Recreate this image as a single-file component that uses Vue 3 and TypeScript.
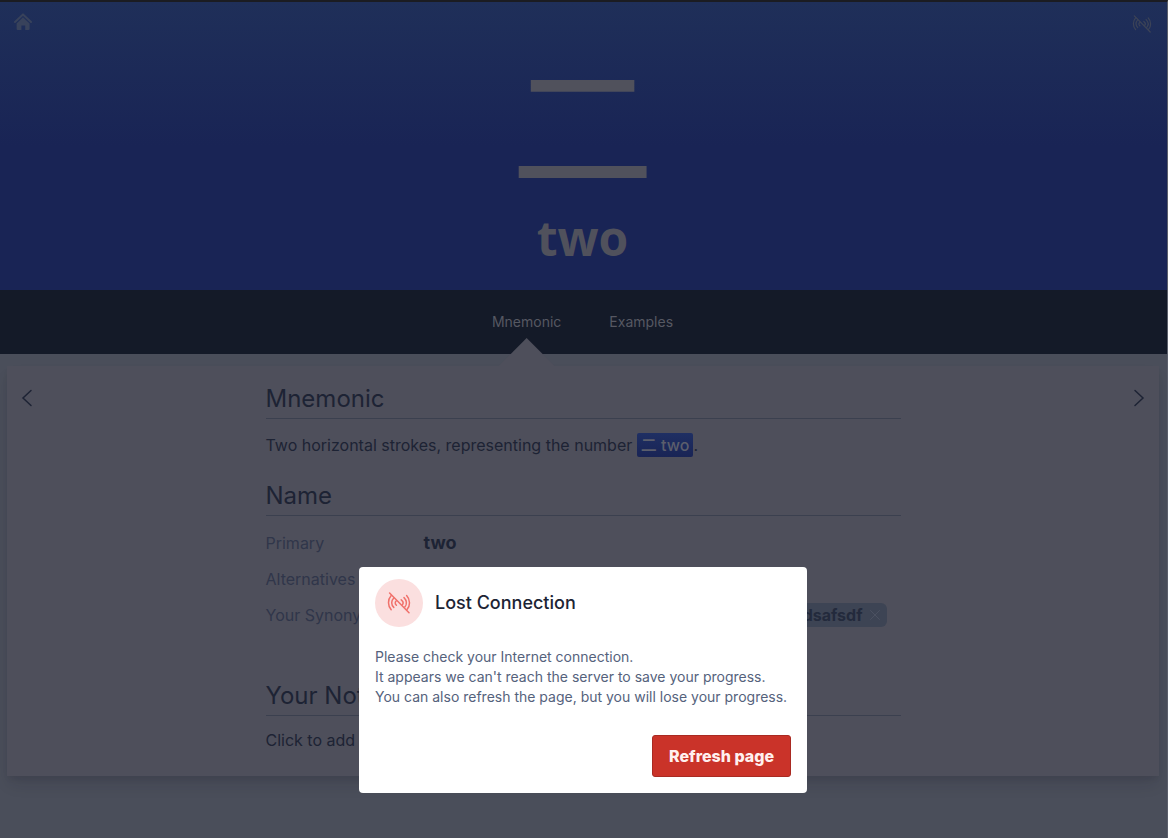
<script setup lang="ts">
const tabs = [
  { label: 'Mnemonic', active: true },
  { label: 'Examples', active: false },
]
const arcs = [
  'M4.2 3.6C0.6 7.6 0.6 13.8 4.2 17.8',
  'M6.8 6C4 8.8 4 12.6 6.8 15.4',
  'M9.4 8.8C7.8 10.2 7.8 11.8 9.4 13.2',
  'M19.6 3.6C23.4 7.6 23.4 13.8 20 17.6',
  'M17 5.6C20 8.6 20 12.4 17.8 15',
  'M14.2 7.8C16.4 9.4 16.4 11.4 15.4 12.8',
  'M2.6 1L22 20.8',
]
</script>

<template>
  <div class="page">
    <header class="hero">
      <a class="home" href="#" aria-label="Home">
        <svg viewBox="0 0 18 18" width="18" height="18">
          <path class="roof" d="M1 9L9 1.4L17 9" />
          <path class="house" d="M9 4.2L15.6 10.4V16Q15.6 17 14.6 17H11.2V12.4H7.4V17H3.6Q2.6 17 2.6 16V10.4Z" />
        </svg>
      </a>
      <svg class="signal" viewBox="0 0 24 22" width="20" height="18">
        <path v-for="d in arcs" :key="d" :d="d" />
      </svg>
      <div class="kanji" lang="ja">二</div>
      <h1>two</h1>
    </header>

    <nav class="tabs">
      <a v-for="t in tabs" :key="t.label" href="#" :class="{ active: t.active }">{{ t.label }}</a>
    </nav>

    <main class="card">
      <button class="arrow" type="button" aria-label="Previous">
        <svg viewBox="0 0 12 18" width="12" height="18"><path d="M10 1.5L2 9L10 16.5" /></svg>
      </button>
      <div class="content">
        <section>
          <h2>Mnemonic</h2>
          <p class="story">
            Two horizontal strokes, representing the number
            <span class="radical"><span class="glyph" lang="ja">二</span> two</span>.
          </p>
        </section>
        <section>
          <h2>Name</h2>
          <dl>
            <dt>Primary</dt>
            <dd class="primary">two</dd>
            <dt>Alternatives</dt>
            <dd></dd>
            <dt>Your Synonyms</dt>
            <dd class="synonyms">
              <span class="chip">dsafsdf
                <button type="button" aria-label="Remove dsafsdf">
                  <svg viewBox="0 0 12 12" width="12" height="12"><path d="M1.5 1.5L10.5 10.5M10.5 1.5L1.5 10.5" /></svg>
                </button>
              </span>
            </dd>
          </dl>
        </section>
        <section>
          <h2>Your Notes</h2>
          <p class="note">Click to add note</p>
        </section>
      </div>
      <button class="arrow" type="button" aria-label="Next">
        <svg viewBox="0 0 12 18" width="12" height="18"><path d="M2 1.5L10 9L2 16.5" /></svg>
      </button>
    </main>

    <div class="overlay">
      <div class="dialog" role="alertdialog" aria-modal="true" aria-labelledby="lost-title" aria-describedby="lost-text">
        <div class="dialog-head">
          <span class="badge">
            <svg viewBox="0 0 24 22" width="24" height="22">
              <path v-for="d in arcs" :key="d" :d="d" />
            </svg>
          </span>
          <h3 id="lost-title">Lost Connection</h3>
        </div>
        <p id="lost-text">
          Please check your Internet connection.<br />
          It appears we can't reach the server to save your progress.<br />
          You can also refresh the page, but you will lose your progress.
        </p>
        <div class="actions">
          <button class="refresh" type="button">Refresh page</button>
        </div>
      </div>
    </div>
  </div>
</template>

<style>
body {
  margin: 0;
  background: #4a4e5a;
}
</style>

<style scoped>
.page {
  box-sizing: border-box;
  min-height: 100vh;
  border-top: 2px solid #1b1c22;
  border-right: 1px solid #5b5f6b;
  padding-right: 1px;
  background: #4a4e5a;
  color: #1d2334;
  font-family: Inter, "Liberation Sans", "Noto Sans CJK JP", sans-serif;
  font-size: 16px;
  line-height: 24px;
}
h1, h2, h3, p, dl, dd { margin: 0; }
button {
  border: 0;
  padding: 0;
  background: none;
  font: inherit;
  color: inherit;
}
svg { display: block; fill: none; stroke: currentColor; stroke-linecap: round; }

.hero {
  position: relative;
  box-sizing: border-box;
  height: 288px;
  margin-right: -1px;
  padding: 44px 2px 0 0;
  background: linear-gradient(#1f2f59, #192455 50%, #192455);
  color: #50515c;
  text-align: center;
}
.home { position: absolute; left: 14px; top: 11px; color: #38425b; }
.roof { stroke-width: 2; stroke-linejoin: round; }
.house { fill: currentColor; stroke: none; }
.signal { position: absolute; right: 15px; top: 13px; color: #3c4357; stroke-width: 1.5; }
.kanji {
  font-family: "Noto Sans CJK JP", sans-serif;
  font-size: 144px;
  line-height: 144px;
}
h1 {
  margin-top: 12px;
  font-family: "Open Sans", "Noto Sans", sans-serif;
  font-size: 48px;
  line-height: 72px;
  font-weight: 700;
}

.tabs {
  display: flex;
  justify-content: center;
  gap: 48px;
  height: 64px;
  margin-right: -1px;
  padding-right: 2px;
  background: #141a28;
  font-size: 14px;
  line-height: 64px;
}
.tabs a { position: relative; color: #565862; text-decoration: none; }
.tabs .active::after {
  content: "";
  position: absolute;
  left: 50%;
  top: 48px;
  width: 56px;
  height: 28px;
  margin-left: -28px;
  background: #4e4f5b;
  clip-path: polygon(50% 0, 100% 100%, 0 100%);
}

.card {
  display: flex;
  justify-content: space-between;
  align-items: flex-start;
  box-sizing: border-box;
  min-height: 410px;
  margin: 12px 7px 0;
  padding: 16px 14px;
  background: #4e4f5b;
  box-shadow: 0 10px 15px -3px rgba(20, 22, 34, 0.14), 0 4px 6px -2px rgba(20, 22, 34, 0.1);
}
.arrow { padding-top: 7px; }
.arrow path { stroke-width: 1.5; }
.content { flex: 0 1 635px; }
h2 {
  margin-bottom: 14px;
  padding-bottom: 2px;
  border-bottom: 1px solid #3b404f;
  font-size: 24px;
  line-height: 34px;
  font-weight: 400;
}
.story { margin-bottom: 22px; }
.note { line-height: 20px; }
.radical {
  display: inline-block;
  padding: 0 4px;
  border-radius: 2px;
  background: linear-gradient(#1f2f63, #192455);
  color: #5b5e6c;
  font-weight: 500;
}
.glyph { font-family: "Noto Sans CJK JP", sans-serif; line-height: 1; }
dl {
  display: grid;
  grid-template-columns: 158px 1fr;
  row-gap: 12px;
  padding: 1px 0 52px;
}
dt { color: #30364a; }
.primary { font-size: 18px; font-weight: 700; }
.synonyms { display: flex; justify-content: flex-end; padding-right: 14px; }
.chip {
  display: flex;
  align-items: center;
  gap: 6px;
  padding: 0 6px 0 8px;
  border-radius: 6px;
  background: #3d4454;
  color: #232a3c;
  font-weight: 700;
}
.chip button { color: #4b5161; }

.overlay {
  position: fixed;
  inset: 0 2px 0 0;
  display: flex;
  align-items: flex-end;
  justify-content: center;
  padding-bottom: 45px;
}
.dialog {
  box-sizing: border-box;
  width: 448px;
  max-width: 100%;
  padding: 12px 16px 16px;
  border-radius: 4px;
  background: #fff;
}
.dialog-head { display: flex; align-items: center; gap: 12px; margin-bottom: 20px; }
.badge {
  display: grid;
  place-items: center;
  width: 48px;
  height: 48px;
  border-radius: 50%;
  background: #fbdfdf;
  color: #f0716b;
}
.badge svg { stroke-width: 1.5; }
h3 { color: #1c2434; font-size: 18px; line-height: 24px; font-weight: 500; }
.dialog p { color: #55627c; font-size: 14px; line-height: 20px; }
.actions { display: flex; justify-content: flex-end; margin-top: 28px; }
.refresh {
  padding: 8px 16px;
  border: 1px solid #a92a22;
  border-radius: 3px;
  background: #ca3329;
  color: #fff0ef;
  font-weight: 800;
}
</style>
